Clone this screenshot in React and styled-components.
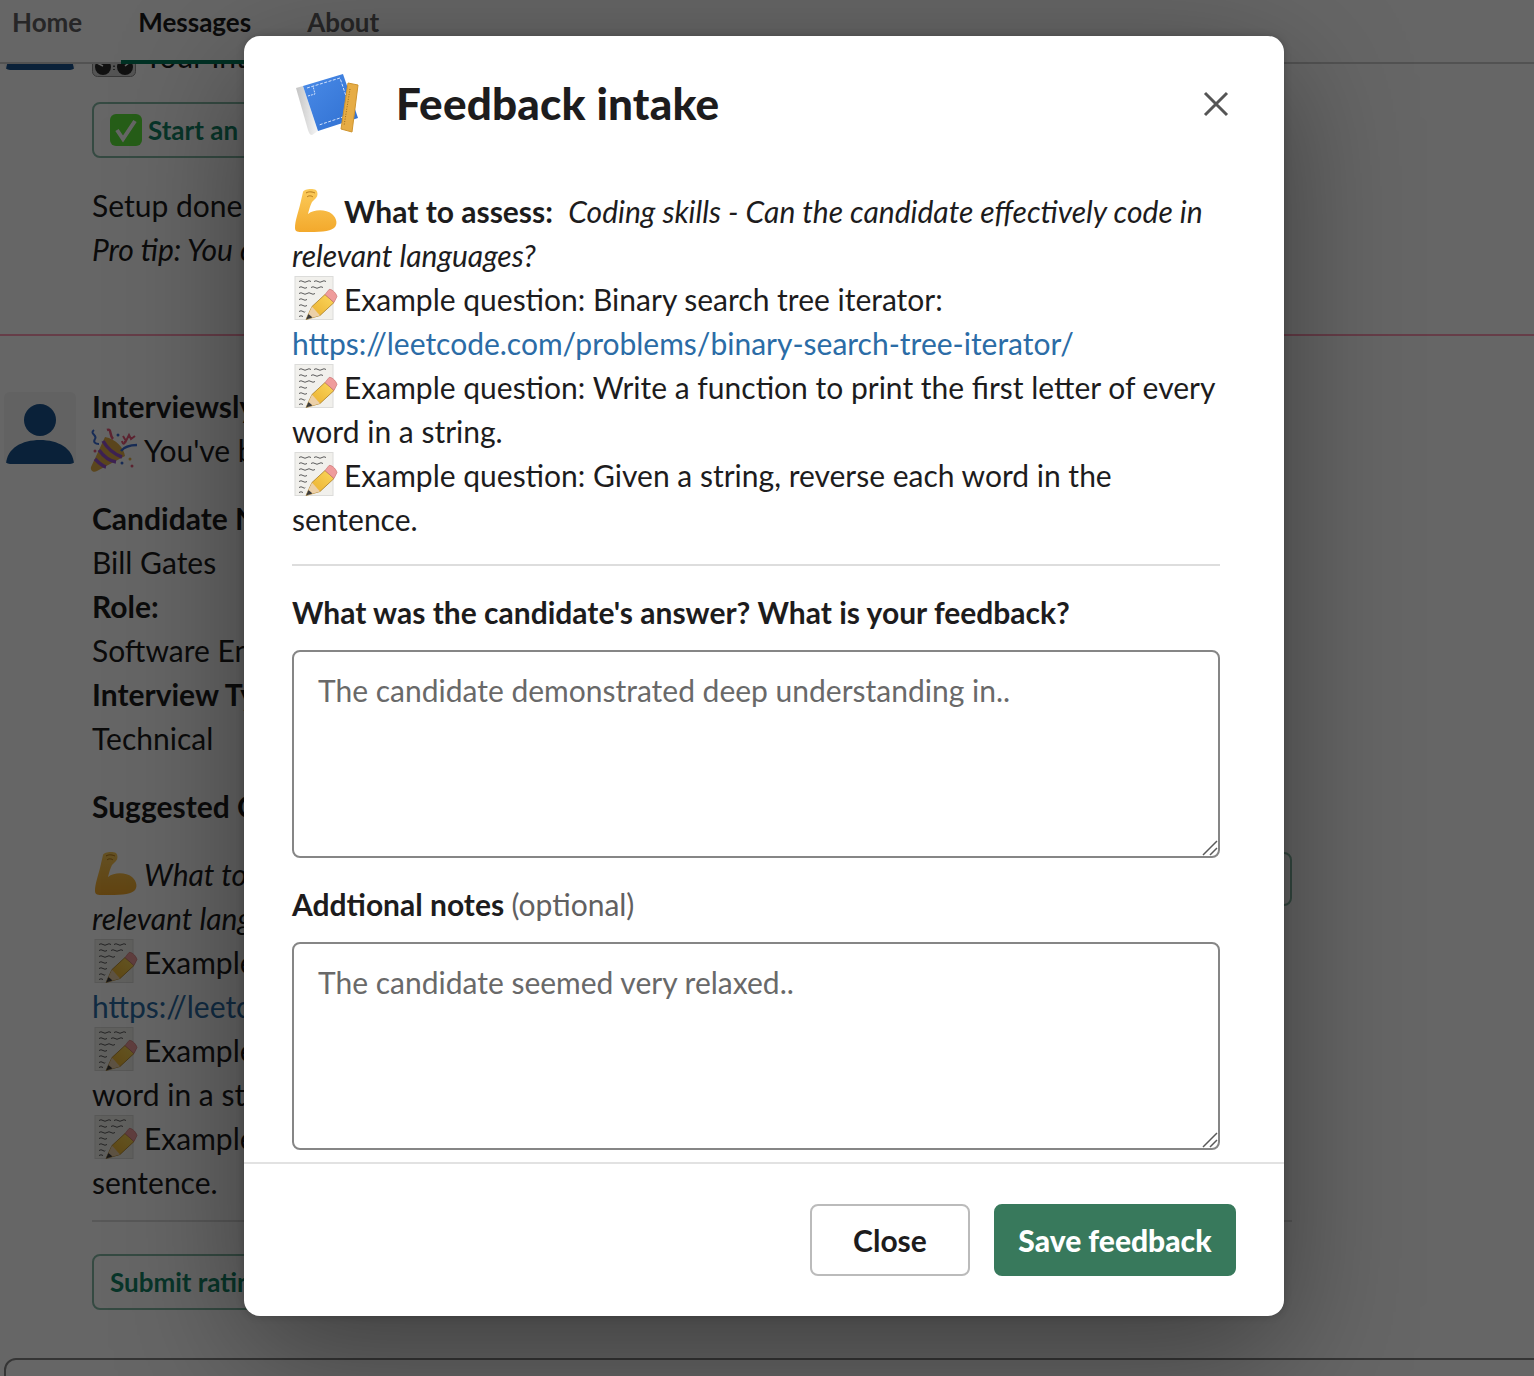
import React from 'react'
import styled, { createGlobalStyle } from 'styled-components'

const GlobalStyle = createGlobalStyle`
  html, body { margin: 0; padding: 0; background: #fff; }
  body { font-family: Lato, "Open Sans", sans-serif; color: #1d1c1d; font-size: 30px; line-height: 44px; }
  * { box-sizing: border-box; }
`

const Page = styled.div`
  position: relative;
  width: 1534px;
  height: 1376px;
  overflow: hidden;
  display: flex;
  flex-direction: column;
`

// slack app home behind the modal
const TabBar = styled.nav`
  flex: none;
  height: 64px;
  display: flex;
  gap: 56px;
  padding-left: 12px;
  border-bottom: 2px solid #ccc;
`

const Tab = styled.div`
  position: relative;
  height: 62px;
  font-size: 26px;
  line-height: 45px;
  font-weight: 700;
  color: ${(props) => (props.active ? '#1d1c1d' : '#616061')};
  &::after {
    content: '';
    display: ${(props) => (props.active ? 'block' : 'none')};
    position: absolute;
    left: -17px;
    right: -17px;
    bottom: -2px;
    height: 4px;
    background: #007a5a;
  }
`

const Feed = styled.div`
  flex: 1;
  min-height: 0;
  overflow: hidden;
  position: relative;
`

const FeedInner = styled.div`
  margin-top: -74px;
`

const Message = styled.div`
  display: grid;
  grid-template-columns: 72px 1200px;
  gap: 16px;
  padding-left: 4px;
`

const AvatarBox = styled.div`
  width: 72px;
  height: 72px;
  margin-top: 8px;
  background: #f4f4f4;
  border-radius: 6px;
  overflow: hidden;
`

const NewDivider = styled.div`
  height: 2px;
  margin: 63px 0 48px;
  background: #ff9ab5;
`

const Name = styled.div`
  font-weight: 700;
`

const Line = styled.div``

const Bold = styled.strong`
  font-weight: 700;
`

const Block = styled.div`
  margin-top: ${(props) => props.top || 24}px;
`

const Section = styled.div`
  display: flex;
  justify-content: space-between;
  align-items: flex-start;
  margin-top: 24px;
`

const SectionText = styled.div`
  width: 928px;
  flex: none;
`

const Accessory = styled.button`
  height: 54px;
  padding: 0 24px;
  border: 2px solid #86b9a5;
  border-radius: 8px;
  background: #fff;
  color: #148567;
  font: 700 26px Lato, sans-serif;
`

const OutlineButton = styled.button`
  display: flex;
  align-items: center;
  height: 56px;
  margin-top: ${(props) => props.top}px;
  padding: 0 16px;
  border: 2px solid #86b9a5;
  border-radius: 8px;
  background: #fff;
  color: #148567;
  font: 700 26px/44px Lato, sans-serif;
`

const Rule = styled.hr`
  height: 2px;
  margin: 16px 0 32px;
  border: 0;
  background: #ddd;
`

const Composer = styled.div`
  position: absolute;
  left: 4px;
  top: 1294px;
  width: 1600px;
  height: 80px;
  border: 2px solid #868686;
  border-radius: 12px;
`

const Link = styled.a`
  color: #2b6ca6;
`

const Emoji = styled.svg`
  display: inline-block;
  width: 44px;
  height: 44px;
  vertical-align: top;
  margin-right: 8px;
  overflow: visible;
  transform: translateY(-1px);
`

const ButtonEmoji = styled.svg`
  width: 32px;
  height: 32px;
  margin-right: 6px;
  flex: none;
`

// modal
const Overlay = styled.div`
  position: absolute;
  inset: 0;
  background: rgba(0, 0, 0, 0.6);
`

const Modal = styled.div`
  position: absolute;
  left: 244px;
  top: 36px;
  width: 1040px;
  height: 1280px;
  display: flex;
  flex-direction: column;
  background: #fff;
  border-radius: 16px;
  box-shadow: 0 0 8px rgba(0, 0, 0, 0.2), 0 36px 130px rgba(0, 0, 0, 0.4);
`

const Header = styled.header`
  flex: none;
  height: 134px;
  display: flex;
  align-items: center;
  padding: 0 48px 0 52px;
`

const HeaderIcon = styled.svg`
  width: 64px;
  height: 64px;
  flex: none;
  margin: 2px 36px 0 0;
  overflow: visible;
`

const Title = styled.h1`
  flex: 1;
  margin: 0;
  font-size: 44px;
  line-height: 56px;
  font-weight: 900;
  letter-spacing: 0.2px;
  color: #1d1c1d;
`

const CloseIcon = styled.button`
  width: 40px;
  height: 40px;
  margin-top: 2px;
  padding: 0;
  border: 0;
  background: none;
  display: flex;
  align-items: center;
  justify-content: center;
`

const Body = styled.div`
  flex: 1;
  min-height: 0;
  padding: 19px 64px 0 48px;
`

const Divider = styled.hr`
  height: 2px;
  margin: 23px 0 24px;
  border: 0;
  background: #ddd;
`

const Label = styled.label`
  display: block;
  font-weight: 700;
  margin-bottom: 16px;
`

const Optional = styled.span`
  font-weight: 400;
  color: #616061;
`

const FieldWrap = styled.div`
  position: relative;
  height: 208px;
  margin-bottom: 24px;
`

const Field = styled.textarea`
  display: block;
  width: 100%;
  height: 100%;
  padding: 16px 24px;
  border: 2px solid #868686;
  border-radius: 8px;
  resize: none;
  outline: none;
  font: 400 30px/44px Lato, sans-serif;
  color: #1d1c1d;
  &::placeholder { color: #696969; opacity: 1; }
`

const Grip = styled.svg`
  position: absolute;
  right: 2px;
  bottom: 2px;
  width: 16px;
  height: 16px;
`

const Footer = styled.footer`
  flex: none;
  height: 154px;
  display: flex;
  justify-content: flex-end;
  gap: 24px;
  padding: 40px 48px 40px 0;
  border-top: 2px solid #e2e2e2;
`

const FooterButton = styled.button`
  height: 72px;
  padding: 0 ${(props) => (props.primary ? 22.5 : 41)}px;
  border: 2px solid ${(props) => (props.primary ? '#38795c' : '#bbb')};
  border-radius: 8px;
  background: ${(props) => (props.primary ? '#38795c' : '#fff')};
  color: ${(props) => (props.primary ? '#fff' : '#1d1c1d')};
  font: ${(props) => (props.primary ? 900 : 700)} 30px/44px Lato, sans-serif;
`

const Biceps = () => (
  <Emoji viewBox="0 0 44 44">
    <defs>
      <linearGradient id="arm" x1="0" y1="0" x2="0" y2="1">
        <stop offset="0" stopColor="#fbcb5a" />
        <stop offset="1" stopColor="#f3a92c" />
      </linearGradient>
    </defs>
    <path d="M11 4C12 1 20 0 24 2C26 4 26 8 24 10L20 14C18 18 17 22 16 26C22 21 34 21 40 26C45 30 46 37 42 40C37 44 28 44 11 44C6 44 3 44 3 40C3 33 6 25 8 17C9 13 10 8 11 4Z" fill="url(#arm)" />
    <path d="M14 5C17 3 21 4 23 5M15 9C17 7 20 8 21 9" stroke="#b4781a" strokeWidth="1" fill="none" />
  </Emoji>
)

const Memo = () => (
  <Emoji viewBox="0 -1.500 44 44">
    <defs>
      <linearGradient id="pencil" x1="0" y1="1" x2="1" y2="0">
        <stop offset="0" stopColor="#e8a928" />
        <stop offset="1" stopColor="#fbd75c" />
      </linearGradient>
    </defs>
    <rect x="3" y="-1" width="38" height="43" fill="#f1f0ec" stroke="#dcdcda" strokeWidth="1" />
    <path d="M7 4q2-1.500 4 0t4 0 4 0M22 4q2-1.500 4 0t4 0 4 0M7 10q2-1.500 4 0t4 0M19 10q2-1.500 4 0t4 0 4 0M7 16q2-1.500 4 0t4 0 4 0 4 0M7 22q2-1.500 4 0t4 0M7 28q2-1.500 4 0t4 0M7 34q2-1.500 4 0t2 0M7 39q2-1.500 4 0" stroke="#5c5c5c" strokeWidth="1" fill="none" />
    <path d="M14 42L20 29L33 17L42 25L28 38Z" fill="url(#pencil)" stroke="#a87c24" strokeWidth="0.8" />
    <path d="M14 42L20 29L28 38Z" fill="#ecd0a8" />
    <path d="M14 42L16.500 36.500L20.500 40Z" fill="#3c3c3c" />
    <path d="M33 17L37 12C39 11 44 15 45 19L42 25Z" fill="#ef9c9c" stroke="#c46f6f" strokeWidth="0.6" />
  </Emoji>
)

const Popper = () => (
  <Emoji viewBox="0 0 44 44">
    <path d="M-1 40C-2 44 2 46 5 44L33 29C32 21 24 12 13 10Z" fill="#e3b04a" />
    <path d="M7 23C12 30 18 34 24 35M3 32C7 36 10 39 14 40M11 14C15 21 22 27 30 30" stroke="#9a55d0" strokeWidth="3.500" fill="none" />
    <path d="M2 3C-3 7 6 8 3 12C1 15 3 17 7 17" stroke="#3c6fd6" strokeWidth="2" fill="none" />
    <path d="M15 3C20 1 17 8 21 12" stroke="#e85a7a" strokeWidth="2.500" fill="none" />
    <path d="M31 9L34 14L37 8L39 12L43 9M33 14C33 17 31 18 30 14" stroke="#e85a7a" strokeWidth="2" fill="none" />
    <path d="M29 24C32 20 37 18 45 18" stroke="#3c6fd6" strokeWidth="2.500" fill="none" />
    <circle cx="26" cy="8" r="1.500" fill="#3c6fd6" />
    <circle cx="38" cy="32" r="1.500" fill="#e8b547" />
    <circle cx="30" cy="36" r="1.500" fill="#3c6fd6" />
    <circle cx="40" cy="39" r="1.500" fill="#e85a7a" />
    <circle cx="3" cy="24" r="1.500" fill="#e85a7a" />
  </Emoji>
)

const Knobs = () => (
  <Emoji viewBox="0 0 44 44">
    <rect x="0.500" y="0.500" width="43" height="43" rx="5" fill="#d2d2d2" stroke="#8e8e8e" />
    <circle cx="11" cy="34" r="8" fill="#2c2c2c" />
    <circle cx="33" cy="34" r="8" fill="#2c2c2c" />
    <path d="M11 33L5 30M33 33L38 29" stroke="#fff" strokeWidth="1.500" />
    <path d="M22 29v8" stroke="#555" strokeWidth="2" strokeDasharray="1.500 2" />
  </Emoji>
)

const Person = () => (
  <svg viewBox="0 0 72 72" width="72" height="72">
    <circle cx="36" cy="28" r="16" fill="#1a5490" />
    <path d="M2 72C3 56 18 48 36 48C54 48 69 56 70 72Z" fill="#1a5490" />
  </svg>
)

const Assessment = ({ plain }) => (
  <>
    <Line>
      <Biceps />
      {plain ? <em>What to assess:</em> : <Bold>What to assess:</Bold>}&nbsp; <em>Coding skills - Can the candidate effectively code in relevant languages?</em>
    </Line>
    <Line><Memo />Example question: Binary search tree iterator: <Link>https://leetcode.com/problems/binary-search-tree-iterator/</Link></Line>
    <Line><Memo />Example question: Write a function to print the first letter of every word in a string.</Line>
    <Line><Memo />Example question: Given a string, reverse each word in the sentence.</Line>
  </>
)

const App = () => (
  <Page>
    <GlobalStyle />
    <TabBar>
      <Tab>Home</Tab>
      <Tab active>Messages</Tab>
      <Tab>About</Tab>
    </TabBar>
    <Feed>
      <FeedInner>
        <Message>
          <AvatarBox><Person /></AvatarBox>
          <div>
            <Name>Interviewsly</Name>
            <Line><Knobs />Your Interview is ready</Line>
            <OutlineButton top={24}>
              <ButtonEmoji viewBox="0 0 32 32">
                <rect width="32" height="32" rx="6" fill="#5feb3c" />
                <path d="M7 16L13 25L25 7" stroke="#fff" strokeWidth="4" fill="none" />
              </ButtonEmoji>
              Start an interview
            </OutlineButton>
            <Block top={25}>
              <Line>Setup done</Line>
              <Line><em>Pro tip: You can run this again</em></Line>
            </Block>
          </div>
        </Message>
        <NewDivider />
        <Message>
          <AvatarBox><Person /></AvatarBox>
          <div>
            <Name>Interviewsly</Name>
            <Line><Popper />You've been assigned an interview</Line>
            <Block>
              <Name>Candidate Name:</Name>
              <Line>Bill Gates</Line>
              <Name>Role:</Name>
              <Line>Software Engineer</Line>
              <Name>Interview Type:</Name>
              <Line>Technical</Line>
            </Block>
            <Block><Name>Suggested Questions</Name></Block>
            <Section>
              <SectionText>
                <Assessment plain />
              </SectionText>
              <Accessory>Feedback</Accessory>
            </Section>
            <Rule />
            <OutlineButton top={0}>Submit rating</OutlineButton>
          </div>
        </Message>
      </FeedInner>
      <Composer />
    </Feed>
    <Overlay />
    <Modal>
      <Header>
        <HeaderIcon viewBox="0 0 64 64">
          <defs>
            <linearGradient id="bookBlue" x1="0" y1="0" x2="1" y2="1">
              <stop offset="0" stopColor="#4a8be8" />
              <stop offset="1" stopColor="#2f6fd0" />
            </linearGradient>
            <linearGradient id="bookSpine" x1="0" y1="0" x2="1" y2="0">
              <stop offset="0" stopColor="#c4c4c4" />
              <stop offset="1" stopColor="#f6f6f6" />
            </linearGradient>
          </defs>
          <path d="M0 16L7 14L22 59L16 63C14 63 13 61 12 58Z" fill="url(#bookSpine)" />
          <path d="M7 14L47 2L62 46L22 59Z" fill="url(#bookBlue)" />
          <path d="M11 16L44 6L56 42L23 53" stroke="#d3e2fb" strokeWidth="1" strokeDasharray="3 1.500" fill="none" />
          <path d="M12 24L19 22L17 14" stroke="#d3e2fb" strokeWidth="1" strokeDasharray="2 1" fill="none" />
          <path d="M52 11L62 13L56 60L45 57Z" fill="#e6ac45" stroke="#cf9530" strokeWidth="1" />
          <path d="M54 17L48 54" stroke="#9a6a18" strokeWidth="1" strokeDasharray="1 1.500" />
        </HeaderIcon>
        <Title>Feedback intake</Title>
        <CloseIcon aria-label="Close">
          <svg width="26" height="26" viewBox="0 0 26 26">
            <path d="M2 2L24 24M24 2L2 24" stroke="#555" strokeWidth="3" fill="none" />
          </svg>
        </CloseIcon>
      </Header>
      <Body>
        <Assessment />
        <Divider />
        <Label>What was the candidate's answer? What is your feedback?</Label>
        <FieldWrap>
          <Field placeholder="The candidate demonstrated deep understanding in.." />
          <Grip viewBox="0 0 16 16">
            <path d="M1 15L15 1M8 15L15 8" stroke="#5a5a5a" strokeWidth="1.500" fill="none" />
          </Grip>
        </FieldWrap>
        <Label>Addtional notes <Optional>(optional)</Optional></Label>
        <FieldWrap>
          <Field placeholder="The candidate seemed very relaxed.." />
          <Grip viewBox="0 0 16 16">
            <path d="M1 15L15 1M8 15L15 8" stroke="#5a5a5a" strokeWidth="1.500" fill="none" />
          </Grip>
        </FieldWrap>
      </Body>
      <Footer>
        <FooterButton>Close</FooterButton>
        <FooterButton primary>Save feedback</FooterButton>
      </Footer>
    </Modal>
  </Page>
)

export default App
